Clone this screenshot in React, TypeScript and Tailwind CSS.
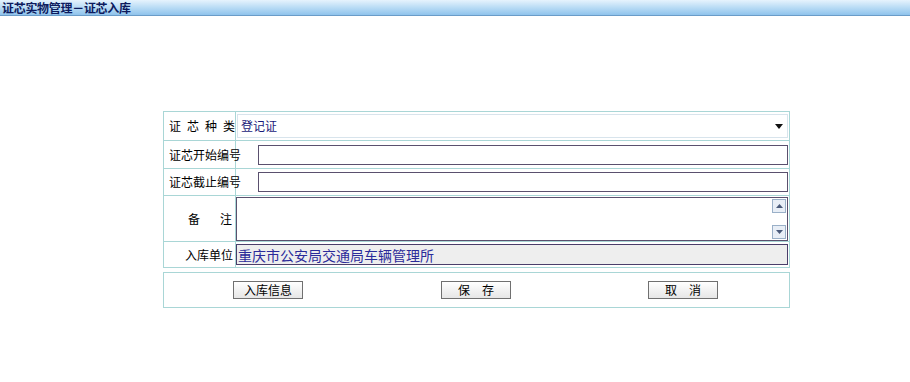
import React from "react";

const font = { fontFamily: '"Noto Sans CJK SC", "Liberation Sans", sans-serif' };

function Btn({ children, w = 70 }: { children: React.ReactNode; w?: number }) {
  return (
    <div
      className="h-[18px] flex items-center justify-center text-[12px] text-black border border-[#707070] bg-gradient-to-b from-[#ffffff] to-[#e6e6e6] leading-none"
      style={{ width: w }}
    >
      {children}
    </div>
  );
}

export default function App() {
  return (
    <div className="w-[910px] h-[382px] bg-white relative" style={font}>
      <div className="h-[16px] border-b border-[#6a9cc8] bg-gradient-to-b from-[#e6f3fd] via-[#b9dcf5] to-[#8fc3ec] flex items-center pl-[2px]">
        <span className="text-[12px] font-bold text-[#0d1b5e] leading-[14px] tracking-[-0.3px]">证芯实物管理－证芯入库</span>
      </div>

      <div className="ml-[163px] mt-[95px] w-[627px]">
        <div className="border border-[#a9d6d6] text-[12px] text-black">
          <div className="flex h-[29px] border-b border-[#a9d6d6]">
            <div className="w-[72px] border-r border-[#a9d6d6] flex items-center pl-[5px] tracking-[6px] whitespace-nowrap">证芯种类</div>
            <div className="flex-1 flex items-center pl-[1px] pr-[1px]">
              <div className="w-full h-[24px] border border-[#d8e4ec] bg-white flex items-center justify-between pl-[3px] pr-[4px]">
                <span className="text-[#1a1a7a] text-[12px]">登记证</span>
                <svg width="8" height="5" viewBox="0 0 8 5"><path d="M0 0h8L4 5z" fill="#111" /></svg>
              </div>
            </div>
          </div>
          <div className="flex h-[28px] border-b border-[#a9d6d6]">
            <div className="w-[72px] border-r border-[#a9d6d6] flex items-center pl-[5px] whitespace-nowrap">证芯开始编号</div>
            <div className="flex-1 flex items-center pl-[22px] pr-[1px]">
              <div className="w-full h-[20px] border border-[#5a506e] bg-white" />
            </div>
          </div>
          <div className="flex h-[27px] border-b border-[#a9d6d6]">
            <div className="w-[72px] border-r border-[#a9d6d6] flex items-center pl-[5px] whitespace-nowrap">证芯截止编号</div>
            <div className="flex-1 flex items-center pl-[22px] pr-[1px]">
              <div className="w-full h-[20px] border border-[#5a506e] bg-white" />
            </div>
          </div>
          <div className="flex h-[46px] border-b border-[#a9d6d6]">
            <div className="w-[72px] border-r border-[#a9d6d6] flex items-center justify-end pr-[3px] gap-[20px] whitespace-nowrap">
              <span>备</span><span>注</span>
            </div>
            <div className="flex-1 flex items-center pr-[1px]">
              <div className="w-full h-[44px] border border-[#5a506e] bg-white flex justify-end">
                <div className="w-[15px] flex flex-col justify-between py-[1px] pr-[1px]">
                  <div className="w-[14px] h-[14px] border border-[#9ab0c8] bg-[#e8eef6] flex items-center justify-center">
                    <svg width="7" height="4" viewBox="0 0 7 4"><path d="M0 4h7L3.5 0z" fill="#4a5a7a" /></svg>
                  </div>
                  <div className="w-[14px] h-[14px] border border-[#9ab0c8] bg-[#e8eef6] flex items-center justify-center">
                    <svg width="7" height="4" viewBox="0 0 7 4"><path d="M0 0h7L3.5 4z" fill="#4a5a7a" /></svg>
                  </div>
                </div>
              </div>
            </div>
          </div>
          <div className="flex h-[25px]">
            <div className="w-[72px] border-r border-[#a9d6d6] flex items-center justify-end pr-[2px] whitespace-nowrap">入库单位</div>
            <div className="flex-1 flex items-center pr-[1px]">
              <div className="w-full h-[21px] border border-[#4a3e6a] bg-[#eeeeee] flex items-center pl-[1px]">
                <span className="text-[14px] text-[#2b2b9a] leading-none">重庆市公安局交通局车辆管理所</span>
              </div>
            </div>
          </div>
        </div>

        <div className="mt-[4px] border border-[#a9d6d6] h-[36px] flex items-center">
          <div className="ml-[69px]"><Btn>入库信息</Btn></div>
          <div className="ml-[138px]"><Btn><span className="tracking-[12px] pl-[12px]">保存</span></Btn></div>
          <div className="ml-[137px]"><Btn><span className="tracking-[12px] pl-[12px]">取消</span></Btn></div>
        </div>
      </div>
    </div>
  );
}
